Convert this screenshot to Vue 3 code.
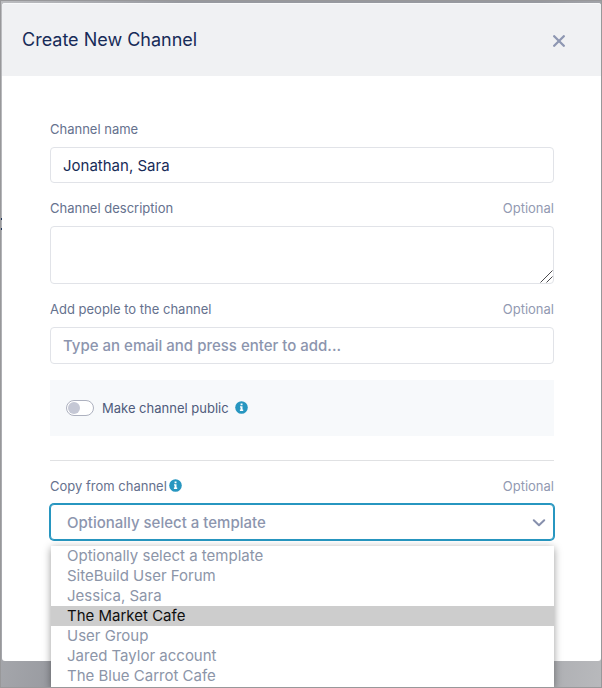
<script setup>
import { ref } from 'vue'

const name = ref('Jonathan, Sara')
const description = ref('')
const people = ref('')
const isPublic = ref(false)
const template = ref('')
const highlighted = ref('The Market Cafe')
const templates = [
  'SiteBuild User Forum',
  'Jessica, Sara',
  'The Market Cafe',
  'User Group',
  'Jared Taylor account',
  'The Blue Carrot Cafe',
]
const rows = ['Optionally select a template', ...templates]
</script>

<template>
  <div class="backdrop">
    <main class="modal" role="dialog" aria-labelledby="title">
      <header class="head">
        <h1 id="title">Create New Channel</h1>
        <button class="close" type="button" aria-label="Close">
          <svg viewBox="0 0 12 12" width="12" height="12">
            <path d="M1.2 1.2 10.8 10.8M10.8 1.2 1.2 10.8" fill="none" stroke="#8e97b2" stroke-width="2.3" stroke-linecap="round" />
          </svg>
        </button>
      </header>

      <form class="body" @submit.prevent>
        <div class="field">
          <div class="label-row"><label for="name">Channel name</label></div>
          <input id="name" v-model="name" class="control" type="text" />
        </div>

        <div class="field">
          <div class="label-row">
            <label for="description">Channel description</label>
            <span class="optional">Optional</span>
          </div>
          <div class="area-wrap">
            <textarea id="description" v-model="description" class="control area"></textarea>
            <svg class="grip" viewBox="0 0 13 13" width="13" height="13">
              <path d="M.5 12.5 12.5 .5M6.5 12.5 12.5 6.5" fill="none" stroke="#4a4a4e" stroke-width="1" />
            </svg>
          </div>
        </div>

        <div class="field">
          <div class="label-row">
            <label for="people">Add people to the channel</label>
            <span class="optional">Optional</span>
          </div>
          <input id="people" v-model="people" class="control people" type="text" placeholder="Type an email and press enter to add..." />
        </div>

        <div class="public">
          <input id="public" v-model="isPublic" class="toggle" type="checkbox" />
          <span class="with-info">
            <label for="public">Make channel public</label>
            <svg class="info" viewBox="0 0 13 13" width="13" height="13">
              <circle cx="6.5" cy="6.5" r="6.3" fill="#2796c0" />
              <path d="M5.6 2.6h1.9v1.7H5.600zM5 5.200h2.500v3.400h.7v1.300H4.900V8.600h.7V6.500H5z" fill="#fff" />
            </svg>
          </span>
        </div>

        <hr class="divider" />

        <div class="field">
          <div class="label-row">
            <span class="with-info tight">
              <label for="template">Copy from channel</label>
              <svg class="info" viewBox="0 0 13 13" width="13" height="13">
                <circle cx="6.5" cy="6.5" r="6.3" fill="#2796c0" />
                <path d="M5.6 2.6h1.9v1.7H5.600zM5 5.200h2.500v3.400h.7v1.300H4.900V8.600h.7V6.500H5z" fill="#fff" />
              </svg>
            </span>
            <span class="optional">Optional</span>
          </div>
          <div class="select-wrap">
            <select id="template" v-model="template" class="control select">
              <option value="">Optionally select a template</option>
              <option v-for="t in templates" :key="t" :value="t">{{ t }}</option>
            </select>
            <svg class="chevron" viewBox="0 0 14 8" width="14" height="8">
              <path d="M1.8 1.2 7 6.2 12.2 1.2" fill="none" stroke="#8790ad" stroke-width="2" stroke-linecap="round" stroke-linejoin="round" />
            </svg>
            <ul class="menu" role="listbox" aria-label="Copy from channel">
              <li v-for="r in rows" :key="r" role="option" :aria-selected="r === highlighted" :class="{ active: r === highlighted }">{{ r }}</li>
            </ul>
          </div>
        </div>
      </form>
    </main>
  </div>
</template>

<style>
body {
  margin: 0;
}
</style>

<style scoped>
* {
  box-sizing: border-box;
}
.backdrop {
  position: relative;
  min-height: 100vh;
  padding: 2px 0 26px 1px;
  border: 1px solid #98989a;
  background: linear-gradient(100deg, #bcbdc0 0%, #97999f 25%, #97999f 75%, #b8b9bc 100%);
  font-family: Inter, "Liberation Sans", sans-serif;
}
/* sliver of the page text that shows past the dialog's left edge */
.backdrop::before {
  content: "";
  position: absolute;
  top: 217px;
  left: 0;
  width: 1px;
  height: 8px;
  border-top: 2px solid #22385c;
  border-bottom: 2px solid #22385c;
}
.modal {
  background: #fff;
  border-radius: 3px;
  color: #172b58;
}
.head {
  display: flex;
  align-items: center;
  justify-content: space-between;
  height: 73px;
  padding: 0 36px 0 20px;
  border-radius: 3px 3px 0 0;
  border-top: 1px solid #f8f9fa;
  background: #f0f1f3;
}
h1 {
  margin: 0;
  font-size: 18px;
  line-height: 24px;
  font-weight: 400;
}
.close {
  display: flex;
  padding: 2px 0 0;
  border: 0;
  background: none;
}
.body {
  padding: 43px 47px 121px 48px;
}
.field + .field {
  margin-top: 15px;
}
.label-row {
  display: flex;
  justify-content: space-between;
  margin-bottom: 8px;
  font-size: 13px;
  line-height: 20px;
  color: #65718e;
}
.optional {
  color: #929ab2;
}
.control {
  display: block;
  width: 100%;
  height: 36px;
  margin: 0;
  padding: 0 12px;
  border: 1px solid #e1e3e8;
  border-radius: 4px;
  outline: 0;
  background: #fff;
  font-family: inherit;
  font-size: 15px;
  font-weight: 400;
  color: #172b58;
}
.area-wrap {
  position: relative;
}
.area {
  height: 58px;
  resize: none;
}
.grip {
  position: absolute;
  right: 1px;
  bottom: 1px;
  pointer-events: none;
}
.people {
  height: 37px;
}
.control::placeholder {
  color: #8c95ae;
  font-weight: 500;
  opacity: 1;
}
.public {
  display: flex;
  align-items: center;
  gap: 8px;
  height: 56px;
  margin-top: 16px;
  padding: 0 16px;
  background: #f7f9fb;
  font-size: 13px;
  line-height: 20px;
  color: #4f5c7c;
}
.toggle {
  appearance: none;
  display: flex;
  align-items: center;
  width: 28px;
  height: 16px;
  margin: 0;
  padding: 1px;
  border: 1px solid #adb1bf;
  border-radius: 8px;
  background: #fff;
}
.toggle::before {
  content: "";
  width: 12px;
  height: 12px;
  border-radius: 50%;
  background: #c5c8d5;
}
.toggle:checked {
  justify-content: flex-end;
}
.divider {
  height: 1px;
  margin: 24px 0 15px;
  border: 0;
  background: #e0e1e3;
}
.with-info {
  display: flex;
  align-items: center;
  gap: 6px;
}
.with-info.tight {
  gap: 2px;
}
.info {
  margin-bottom: 1px;
}
.select-wrap {
  position: relative;
}
.select {
  appearance: none;
  padding: 0 36px 0 16px;
  border-color: #2796c0;
  box-shadow: 0 0 0 1px #2796c0;
  font-weight: 500;
  color: #8c95ae;
}
.chevron {
  position: absolute;
  top: 15px;
  right: 8px;
  pointer-events: none;
}
.menu {
  position: absolute;
  top: 42px;
  left: 1px;
  right: 0;
  margin: 0;
  padding: 0 0 1px;
  list-style: none;
  background: #fff;
  box-shadow: 0 2px 8px rgba(0, 0, 0, 0.4);
  clip-path: inset(-8px -12px 0 -12px);
  font-size: 15px;
  line-height: 20px;
  color: #8c95a8;
}
.menu li {
  padding: 0 16px;
}
.menu .active {
  background: #cdcdcd;
  color: #101010;
}
</style>
